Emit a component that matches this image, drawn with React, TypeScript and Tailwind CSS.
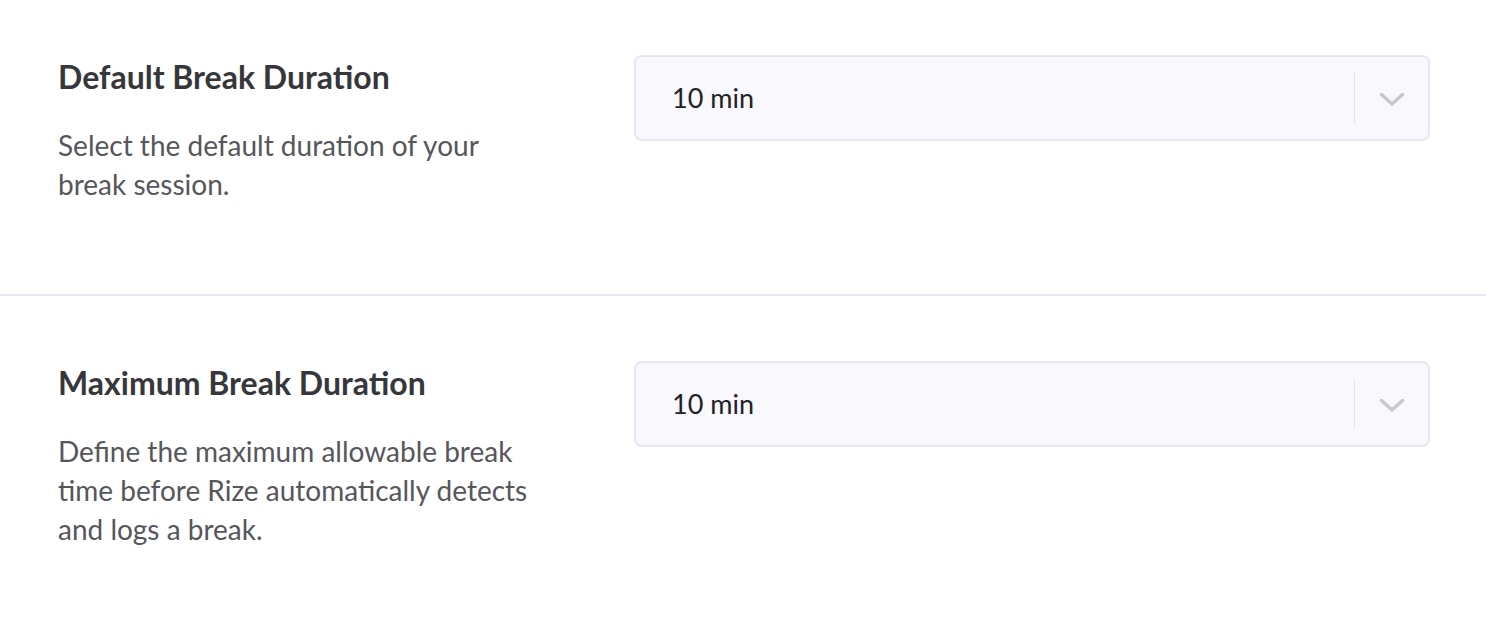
import React from 'react';

type Setting = {
  title: string;
  description: string;
  value: string;
  top: string;
};

const settings: Setting[] = [
  {
    title: 'Default Break Duration',
    description: 'Select the default duration of your break session.',
    value: '10 min',
    top: 'pt-[55px]',
  },
  {
    title: 'Maximum Break Duration',
    description: 'Define the maximum allowable break time before Rize automatically detects and logs a break.',
    value: '10 min',
    top: 'pt-[65px]',
  },
];

function Chevron() {
  return (
    <svg width="26" height="15" viewBox="0 0 26 15" fill="none">
      <path d="M2.5 2.5 L13 12 L23.5 2.5" stroke="#c9c9cc" strokeWidth="3.5" strokeLinecap="round" strokeLinejoin="round" />
    </svg>
  );
}

function SelectBox({ value }: { value: string }) {
  return (
    <div className="flex h-[86px] flex-1 items-center rounded-lg border-2 border-[#e6e6f4] bg-[#f8f8fd]">
      <span className="flex-1 pl-[36px] text-[27px] text-[#222226]">{value}</span>
      <div className="h-[52px] w-px bg-[#e4e4f0]" />
      <div className="flex w-[73px] items-center justify-center pt-[2px]">
        <Chevron />
      </div>
    </div>
  );
}

export default function App() {
  return (
    <div className="min-h-screen bg-white" style={{ fontFamily: 'Lato, "Noto Sans", sans-serif' }}>
      {settings.map((s, i) => (
        <div key={s.title}>
          {i > 0 && <div className="h-[2px] bg-[#e8e8f2]" />}
          <div className={`flex items-start pl-[58px] pr-[56px] pb-[90px] ${s.top}`}>
            <div className="w-[576px] shrink-0">
              <h2 className="mt-[2px] text-[32px] leading-[40px] font-bold text-[#37373b]">{s.title}</h2>
              <p className="mt-[29px] w-[482px] text-[28px] leading-[39px] text-[#56565c]">{s.description}</p>
            </div>
            <SelectBox value={s.value} />
          </div>
        </div>
      ))}
    </div>
  );
}
